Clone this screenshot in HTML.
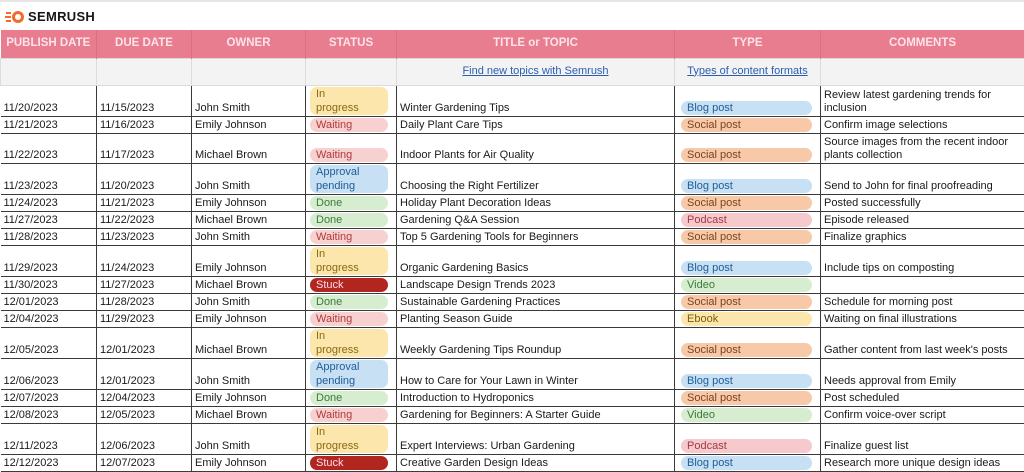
<!DOCTYPE html>
<html><head><meta charset="utf-8"><style>
*{margin:0;padding:0;box-sizing:border-box}
body{width:1024px;height:467px;overflow:hidden;background:#fff;font-family:"Liberation Sans",Arial,sans-serif;font-size:11px;color:#1a1a1a;position:relative}
.top{position:absolute;left:0;top:0;width:1024px;height:30px;border-top:2px solid #e6e6e6}
.logo{position:absolute;left:5px;top:7px;display:flex;align-items:center}
.logo span{font-weight:bold;font-size:13px;letter-spacing:0.3px;margin-left:3px;color:#171717}
table{position:absolute;left:0;top:30px;border-collapse:collapse;table-layout:fixed;width:1024px}
td{overflow:hidden;white-space:nowrap;vertical-align:bottom;padding:0 3px 1px 3px;line-height:13px}
tr.h td{background:#e97d90;color:#fde4e8;font-weight:bold;text-align:center;vertical-align:middle;height:28px;border-right:1px solid #e26d82;font-size:11.5px;padding-top:1px}
tr.g td{background:#f3f3f3;height:27px;border:1px solid #dcdcdc;vertical-align:middle;text-align:center}
tr.g a{color:#2a5db0;text-decoration:underline}
tr.d td{border:1px solid #3a3a3a}
tr.d td:first-child{border-left:none}
.p{display:block;border-radius:7px;padding:0 6px;line-height:14px;white-space:normal}
.ip{background:#fce6ac;color:#8a6a10}
.wa{background:#f7d0d0;color:#b23a3a}
.ap{background:#c7e0f4;color:#1f5d98}
.dn{background:#d6edd0;color:#3c7a3c}
.st{background:#b1261f;color:#fde}
.bl{background:#c7e0f4;color:#1f5d98}
.so{background:#f7c9a9;color:#7a4420}
.po{background:#f6c9cc;color:#a33a44}
.vi{background:#d6edd0;color:#3c7a3c}
.eb{background:#fce6ac;color:#7a5c0a}
td.s{padding:1px 8px 1px 4px}
td.t{padding:1px 8px 1px 6px}
td.c{white-space:normal}
</style></head><body>
<div class="top"><div class="logo">
<svg width="20" height="14" viewBox="0 0 20 14"><path d="M1 3h5M0 7h6M1 11h5" stroke="#f26b2b" stroke-width="2"/><circle cx="13" cy="7" r="6" fill="#f26b2b"/><circle cx="13" cy="7" r="3" fill="#fff"/></svg>
<span>SEMRUSH</span></div></div>
<table>
<colgroup><col style="width:96px"><col style="width:95px"><col style="width:114px"><col style="width:91px"><col style="width:278px"><col style="width:146px"><col style="width:204px"></colgroup>
<tr class="h"><td>PUBLISH DATE</td><td>DUE DATE</td><td>OWNER</td><td>STATUS</td><td>TITLE or TOPIC</td><td>TYPE</td><td>COMMENTS</td></tr>
<tr class="g"><td></td><td></td><td></td><td></td><td><a>Find new topics with Semrush</a></td><td><a>Types of content formats</a></td><td></td></tr>
<tr class="d" style="height:30px"><td>11/20/2023</td><td>11/15/2023</td><td>John Smith</td><td class="s"><span class="p ip">In<br>progress</span></td><td>Winter Gardening Tips</td><td class="t"><span class="p bl">Blog post</span></td><td class="c">Review latest gardening trends for inclusion</td></tr>
<tr class="d" style="height:17px"><td>11/21/2023</td><td>11/16/2023</td><td>Emily Johnson</td><td class="s"><span class="p wa">Waiting</span></td><td>Daily Plant Care Tips</td><td class="t"><span class="p so">Social post</span></td><td>Confirm image selections</td></tr>
<tr class="d" style="height:30px"><td>11/22/2023</td><td>11/17/2023</td><td>Michael Brown</td><td class="s"><span class="p wa">Waiting</span></td><td>Indoor Plants for Air Quality</td><td class="t"><span class="p so">Social post</span></td><td class="c">Source images from the recent indoor plants collection</td></tr>
<tr class="d" style="height:30px"><td>11/23/2023</td><td>11/20/2023</td><td>John Smith</td><td class="s"><span class="p ap">Approval<br>pending</span></td><td>Choosing the Right Fertilizer</td><td class="t"><span class="p bl">Blog post</span></td><td>Send to John for final proofreading</td></tr>
<tr class="d" style="height:17px"><td>11/24/2023</td><td>11/21/2023</td><td>Emily Johnson</td><td class="s"><span class="p dn">Done</span></td><td>Holiday Plant Decoration Ideas</td><td class="t"><span class="p so">Social post</span></td><td>Posted successfully</td></tr>
<tr class="d" style="height:17px"><td>11/27/2023</td><td>11/22/2023</td><td>Michael Brown</td><td class="s"><span class="p dn">Done</span></td><td>Gardening Q&amp;A Session</td><td class="t"><span class="p po">Podcast</span></td><td>Episode released</td></tr>
<tr class="d" style="height:17px"><td>11/28/2023</td><td>11/23/2023</td><td>John Smith</td><td class="s"><span class="p wa">Waiting</span></td><td>Top 5 Gardening Tools for Beginners</td><td class="t"><span class="p so">Social post</span></td><td>Finalize graphics</td></tr>
<tr class="d" style="height:30px"><td>11/29/2023</td><td>11/24/2023</td><td>Emily Johnson</td><td class="s"><span class="p ip">In<br>progress</span></td><td>Organic Gardening Basics</td><td class="t"><span class="p bl">Blog post</span></td><td>Include tips on composting</td></tr>
<tr class="d" style="height:17px"><td>11/30/2023</td><td>11/27/2023</td><td>Michael Brown</td><td class="s"><span class="p st">Stuck</span></td><td>Landscape Design Trends 2023</td><td class="t"><span class="p vi">Video</span></td><td></td></tr>
<tr class="d" style="height:17px"><td>12/01/2023</td><td>11/28/2023</td><td>John Smith</td><td class="s"><span class="p dn">Done</span></td><td>Sustainable Gardening Practices</td><td class="t"><span class="p so">Social post</span></td><td>Schedule for morning post</td></tr>
<tr class="d" style="height:17px"><td>12/04/2023</td><td>11/29/2023</td><td>Emily Johnson</td><td class="s"><span class="p wa">Waiting</span></td><td>Planting Season Guide</td><td class="t"><span class="p eb">Ebook</span></td><td>Waiting on final illustrations</td></tr>
<tr class="d" style="height:30px"><td>12/05/2023</td><td>12/01/2023</td><td>Michael Brown</td><td class="s"><span class="p ip">In<br>progress</span></td><td>Weekly Gardening Tips Roundup</td><td class="t"><span class="p so">Social post</span></td><td>Gather content from last week's posts</td></tr>
<tr class="d" style="height:30px"><td>12/06/2023</td><td>12/01/2023</td><td>John Smith</td><td class="s"><span class="p ap">Approval<br>pending</span></td><td>How to Care for Your Lawn in Winter</td><td class="t"><span class="p bl">Blog post</span></td><td>Needs approval from Emily</td></tr>
<tr class="d" style="height:17px"><td>12/07/2023</td><td>12/04/2023</td><td>Emily Johnson</td><td class="s"><span class="p dn">Done</span></td><td>Introduction to Hydroponics</td><td class="t"><span class="p so">Social post</span></td><td>Post scheduled</td></tr>
<tr class="d" style="height:17px"><td>12/08/2023</td><td>12/05/2023</td><td>Michael Brown</td><td class="s"><span class="p wa">Waiting</span></td><td>Gardening for Beginners: A Starter Guide</td><td class="t"><span class="p vi">Video</span></td><td>Confirm voice-over script</td></tr>
<tr class="d" style="height:30px"><td>12/11/2023</td><td>12/06/2023</td><td>John Smith</td><td class="s"><span class="p ip">In<br>progress</span></td><td>Expert Interviews: Urban Gardening</td><td class="t"><span class="p po">Podcast</span></td><td>Finalize guest list</td></tr>
<tr class="d" style="height:17px"><td>12/12/2023</td><td>12/07/2023</td><td>Emily Johnson</td><td class="s"><span class="p st">Stuck</span></td><td>Creative Garden Design Ideas</td><td class="t"><span class="p bl">Blog post</span></td><td>Research more unique design ideas</td></tr>
</table>
</body></html>
